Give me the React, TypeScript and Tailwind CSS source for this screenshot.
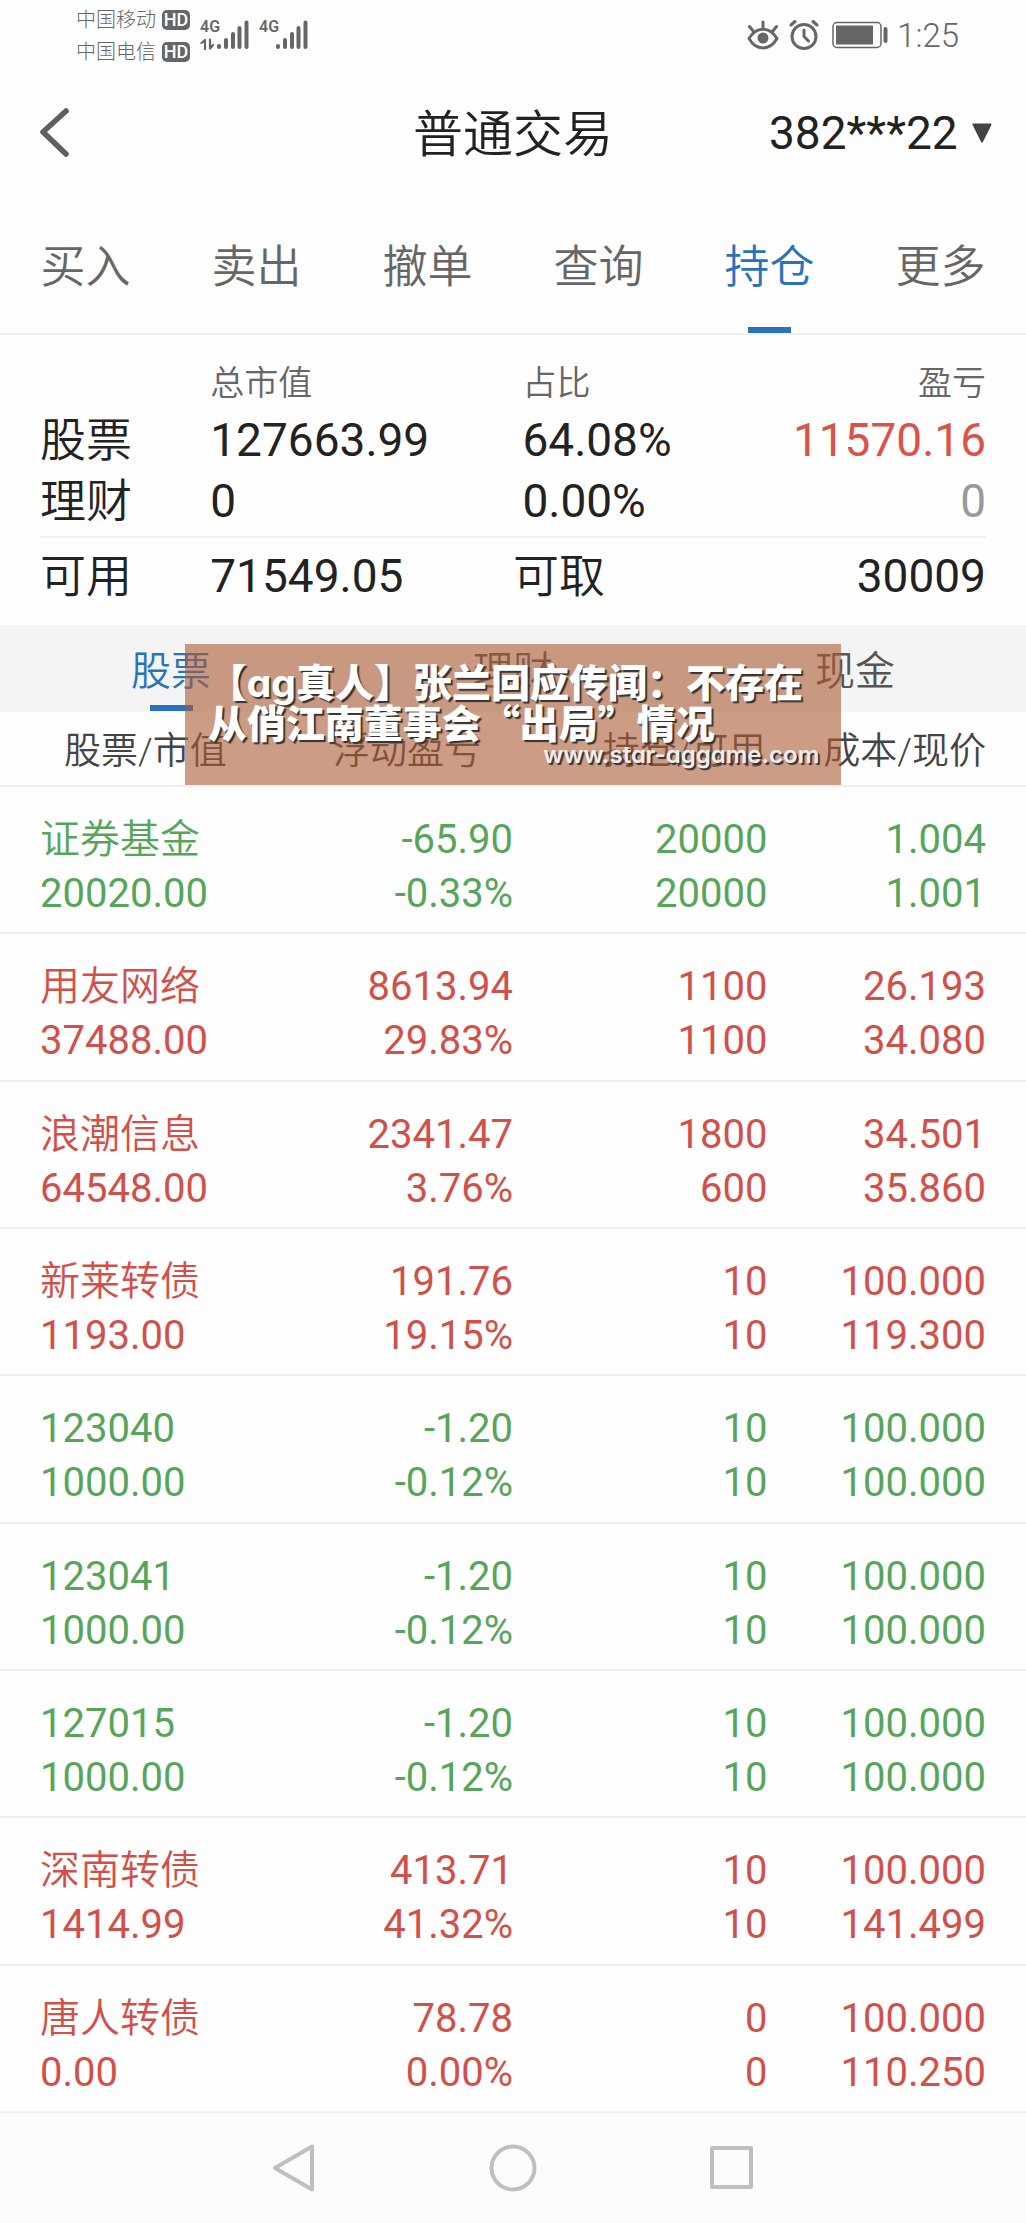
import { useState } from "react";

type Holding = {
    name: string;
    value: string;
    profit: string;
    rate: string;
    amount: string;
    usable: string;
    cost: string;
    price: string;
    up: boolean;
};

const menu = ["买入", "卖出", "撤单", "查询", "持仓", "更多"];
const assetTabs = ["股票", "理财", "现金"];

const holdings: Holding[] = [
    { name: "证券基金", value: "20020.00", profit: "-65.90", rate: "-0.33%", amount: "20000", usable: "20000", cost: "1.004", price: "1.001", up: false },
    { name: "用友网络", value: "37488.00", profit: "8613.94", rate: "29.83%", amount: "1100", usable: "1100", cost: "26.193", price: "34.080", up: true },
    { name: "浪潮信息", value: "64548.00", profit: "2341.47", rate: "3.76%", amount: "1800", usable: "600", cost: "34.501", price: "35.860", up: true },
    { name: "新莱转债", value: "1193.00", profit: "191.76", rate: "19.15%", amount: "10", usable: "10", cost: "100.000", price: "119.300", up: true },
    { name: "123040", value: "1000.00", profit: "-1.20", rate: "-0.12%", amount: "10", usable: "10", cost: "100.000", price: "100.000", up: false },
    { name: "123041", value: "1000.00", profit: "-1.20", rate: "-0.12%", amount: "10", usable: "10", cost: "100.000", price: "100.000", up: false },
    { name: "127015", value: "1000.00", profit: "-1.20", rate: "-0.12%", amount: "10", usable: "10", cost: "100.000", price: "100.000", up: false },
    { name: "深南转债", value: "1414.99", profit: "413.71", rate: "41.32%", amount: "10", usable: "10", cost: "100.000", price: "141.499", up: true },
    { name: "唐人转债", value: "0.00", profit: "78.78", rate: "0.00%", amount: "0", usable: "0", cost: "100.000", price: "110.250", up: true },
];

const Carrier = ({ name }: { name: string }) => (
    <div className="flex items-center gap-1.5 text-[20px] leading-8 font-light">
        <span>{name}</span>
        <span className="flex h-5 w-7 items-center justify-center rounded-[5px] bg-[#666] text-[18px] leading-5 font-medium text-white">HD</span>
    </div>
);

const Signal = ({ data }: { data?: boolean }) => (
    <div className="relative h-[30px] w-[49px]">
        <span className="absolute top-0 left-0 text-[16px] leading-[14px] font-semibold">4G</span>
        <svg width="49" height="30" viewBox="0 0 49 30" fill="none" stroke="currentColor" strokeWidth="4" strokeLinecap="round">
            {data && <path d="M5 20v9M1.500 23L5 20M10 19.500v9M13 25l-3 3.500" strokeWidth="2.200" />}
            <path d="M19 26v1M26 20v7M33 14v13M39.500 8v19M46.500 2.500v24.500" />
        </svg>
    </div>
);

const StatusBar = () => (
    <div className="flex h-[72px] items-start justify-between pr-[67px] pl-[76px] text-[#666]">
        <div className="flex">
            <div className="pt-1">
                <Carrier name="中国移动" />
                <Carrier name="中国电信" />
            </div>
            <div className="ml-2.5 flex gap-2.5 pt-5">
                <Signal data />
                <Signal />
            </div>
        </div>
        <div className="flex items-center pt-4">
            {/* eye comfort */}
            <svg width="32" height="30" viewBox="0 0 32 30" fill="none" stroke="currentColor" strokeWidth="3" strokeLinecap="round">
                <path d="M2 18.500C9 6 23 6 30 18.500C23 31 9 31 2 18.500Z" strokeLinejoin="round" />
                <path d="M16 2v6M2.500 6.500l4 5M29.500 6.500l-4 5" />
                <circle cx="16" cy="18" r="5.500" fill="currentColor" stroke="none" />
            </svg>
            {/* alarm */}
            <svg className="ml-2.5" width="30" height="30" viewBox="0 0 30 30" fill="none" stroke="currentColor" strokeWidth="3" strokeLinecap="round">
                <circle cx="15" cy="16.500" r="12" />
                <path d="M15 10v6.500l4.500 4.500M2 5l4-3.500M28 5l-4-3.500" />
            </svg>
            {/* battery */}
            <svg className="ml-3" width="58" height="28" viewBox="0 0 58 28" fill="none" stroke="currentColor">
                <rect x="2" y="1.500" width="48" height="25" rx="4" strokeWidth="1.500" />
                <rect x="5" y="4.500" width="37" height="19" fill="currentColor" stroke="none" />
                <path d="M54.500 8v12" strokeWidth="4" strokeLinecap="round" />
            </svg>
            <span className="ml-2 pt-0.5 text-[33px] leading-9 font-light">1:25</span>
        </div>
    </div>
);

const Header = () => (
    <header className="grid h-[122px] grid-cols-[1fr_auto_1fr] items-center px-[34px] text-[#222]">
        <button type="button" aria-label="返回" className="w-10">
            <svg width="40" height="52" viewBox="0 0 40 52" fill="none" stroke="#5f5f5f" strokeWidth="5.500" strokeLinecap="round" strokeLinejoin="round">
                <path d="M32 4L9 25L32 47" />
            </svg>
        </button>
        <h1 className="pt-1 text-[50px] leading-[60px] font-[350]">普通交易</h1>
        <label className="flex items-center justify-end gap-3.5">
            <select aria-label="账户" className="appearance-none bg-transparent text-[46px] leading-[60px]">
                <option>382***22</option>
            </select>
            <svg width="20" height="20" viewBox="0 0 20 20" fill="#444" stroke="#444" strokeWidth="2" strokeLinejoin="round">
                <path d="M1.500 1.500h17L10 18.500Z" />
            </svg>
        </label>
    </header>
);

const Summary = () => (
    <section className="px-10 text-[46px] leading-[61px] text-[#222]">
        <table className="mt-[21px] w-full table-fixed">
            <thead>
                <tr className="text-[34px] leading-[54px] text-[#666]">
                    <td className="w-[18%]"></td>
                    <th className="w-[33%] text-left font-[350]">总市值</th>
                    <th className="text-left font-[350]">占比</th>
                    <th className="text-right font-[350]">盈亏</th>
                </tr>
            </thead>
            <tbody>
                <tr>
                    <th className="text-left font-[350]">股票</th>
                    <td>127663.99</td>
                    <td>64.08%</td>
                    <td className="text-right text-[#d9534a]">11570.16</td>
                </tr>
                <tr>
                    <th className="text-left font-[350]">理财</th>
                    <td>0</td>
                    <td>0.00%</td>
                    <td className="text-right text-[#999]">0</td>
                </tr>
            </tbody>
        </table>
        <dl className="mt-1 grid grid-cols-[18%_32%_20%_30%] border-t-2 border-[#f2f2f2] pt-2 pb-[18px]">
            <dt className="font-[350]">可用</dt>
            <dd>71549.05</dd>
            <dt className="font-[350]">可取</dt>
            <dd className="text-right">30009</dd>
        </dl>
    </section>
);

const Banner = () => (
    <div className="absolute top-[19px] left-[18%] w-[64%] bg-[rgba(172,90,52,0.6)] pt-[17px] pr-[22px] pb-4 pl-[23px] font-['Noto_Sans_CJK_SC',sans-serif] text-white">
        <p className="text-[39px] leading-[39px] font-black whitespace-nowrap [text-shadow:2px_2px_1px_#333]">
            【<span className="font-['Inter',sans-serif] font-bold [font-feature-settings:'cv11']">ag</span>真人】张兰回应传闻：不存在
            <br />
            从俏江南董事会“出局”情况
        </p>
        <p className="text-right font-['Inter',sans-serif] text-[24px] leading-7 font-semibold text-[#eee] [font-feature-settings:'cv11'] [text-shadow:2px_2px_1px_#333]">
            www.star-aggame.com
        </p>
    </div>
);

const HoldingRow = ({ item }: { item: Holding }) => (
    <tr className={item.up ? "text-[#d2504a]" : "text-[#57a55a]"}>
        <td className="border-b-2 border-[#f0f0f0] pt-[26px] pb-[11px] pl-10 align-top">
            <p className={/^\d/.test(item.name) ? "" : "font-[350]"}>{item.name}</p>
            <p>{item.value}</p>
        </td>
        <td className="border-b-2 border-[#f0f0f0] pt-[26px] pb-[11px] text-right align-top">
            <p>{item.profit}</p>
            <p>{item.rate}</p>
        </td>
        <td className="border-b-2 border-[#f0f0f0] pt-[26px] pr-0.5 pb-[11px] text-right align-top">
            <p>{item.amount}</p>
            <p>{item.usable}</p>
        </td>
        <td className="border-b-2 border-[#f0f0f0] pt-[26px] pr-10 pb-[11px] text-right align-top">
            <p>{item.cost}</p>
            <p>{item.price}</p>
        </td>
    </tr>
);

const App = () => {
    const [active, setActive] = useState("持仓");
    const [asset, setAsset] = useState("股票");

    return (
        <div lang="zh-CN" className="flex min-h-screen flex-col bg-[#fefefe] font-['Roboto','Noto_Sans_CJK_SC',sans-serif]">
            <StatusBar />
            <Header />

            <nav className="grid grid-cols-6 border-b-2 border-[#f0f0f0]">
                {menu.map((item) => (
                    <button key={item} type="button" onClick={() => setActive(item)}
                        className={`flex flex-col items-center pt-12 text-[45px] leading-[52px] font-[350] ${active === item ? "text-[#2a73bb]" : "text-[#666]"}`}>
                        {item}
                        <span className={`mt-[33px] h-1.5 w-[43px] ${active === item ? "bg-[#2a73bb]" : ""}`} />
                    </button>
                ))}
            </nav>

            <Summary />

            <section className="relative flex flex-1 flex-col">
                <div className="grid grid-cols-3 bg-[#f4f4f4]">
                    {assetTabs.map((item) => (
                        <button key={item} type="button" onClick={() => setAsset(item)}
                            className={`flex flex-col items-center pt-[22px] text-[40px] leading-[50px] font-[350] ${asset === item ? "text-[#2a73bb]" : "text-[#555]"}`}>
                            {item}
                            <span className={`mt-2 mb-px h-1.5 w-[43px] ${asset === item ? "bg-[#2a73bb]" : ""}`} />
                        </button>
                    ))}
                </div>

                <div className="grid flex-1">
                    <table className="w-full table-fixed border-separate border-spacing-0 text-[40px] leading-[54px]">
                        <thead>
                            <tr className="h-[75px] text-[37px] text-[#444]">
                                <th className="border-b-2 border-[#f0f0f0] pt-1.5 pl-16 text-left font-[350] whitespace-nowrap">股票/市值</th>
                                <th className="border-b-2 border-[#f0f0f0] pt-1.5 pr-8 text-right font-[350] whitespace-nowrap">浮动盈亏</th>
                                <th className="border-b-2 border-[#f0f0f0] pt-1.5 pr-1 text-right font-[350] whitespace-nowrap">持仓/可用</th>
                                <th className="border-b-2 border-[#f0f0f0] pt-1.5 pr-10 text-right font-[350] whitespace-nowrap">成本/现价</th>
                            </tr>
                        </thead>
                        <tbody>
                            {holdings.map((item) => <HoldingRow key={item.name} item={item} />)}
                        </tbody>
                    </table>
                </div>

                <Banner />
            </section>

            <footer className="flex h-[110px] justify-center bg-[#fcfcfc]">
                <div className="grid w-[64%] grid-cols-3 place-items-center">
                    <button type="button" aria-label="返回">
                        <svg width="48" height="48" viewBox="0 0 48 48" fill="none" stroke="#bfbfbf" strokeWidth="4" strokeLinejoin="round">
                            <path d="M42 2.500V45.500L5 24Z" />
                        </svg>
                    </button>
                    <button type="button" aria-label="主页">
                        <svg width="48" height="48" viewBox="0 0 48 48" fill="none" stroke="#bfbfbf" strokeWidth="4">
                            <circle cx="24" cy="24" r="21.500" />
                        </svg>
                    </button>
                    <button type="button" aria-label="最近任务">
                        <svg width="48" height="48" viewBox="0 0 48 48" fill="none" stroke="#bfbfbf" strokeWidth="4" strokeLinejoin="round">
                            <rect x="4" y="4" width="39" height="39" />
                        </svg>
                    </button>
                </div>
            </footer>
        </div>
    );
};

export default App;
